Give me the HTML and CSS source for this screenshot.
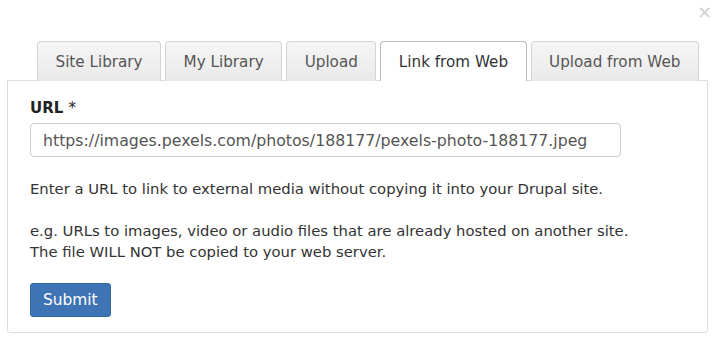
FILE: index.html
```html
<!DOCTYPE html>
<html lang="en">
<head>
  <meta charset="UTF-8">
  <title>Insert Media</title>
  <link rel="stylesheet" href="styles.css">
</head>
<body>
  <div class="dialog">
    <a class="close" href="#">&times;</a>

    <ul class="tabs">
      <li><a href="#">Site Library</a></li>
      <li><a href="#">My Library</a></li>
      <li><a href="#">Upload</a></li>
      <li class="active"><a href="#">Link from Web</a></li>
      <li><a href="#">Upload from Web</a></li>
    </ul>

    <div class="panel">
      <label for="url">URL <span class="req">*</span></label>
      <input type="text" id="url" value="https://images.pexels.com/photos/188177/pexels-photo-188177.jpeg">

      <p>Enter a URL to link to external media without copying it into your Drupal site.</p>
      <p>e.g. URLs to images, video or audio files that are already hosted on another site.<br>
        The file WILL NOT be copied to your web server.</p>

      <button class="submit">Submit</button>
    </div>
  </div>
</body>
</html>
```

FILE: styles.css
```css
* {
  box-sizing: border-box;
}

body {
  margin: 0;
  font-family: 'DejaVu Sans', Verdana, sans-serif;
  font-size: 13px;
  color: #333;
  background: #fff;
}

.dialog {
  position: relative;
  padding: 41px 7px 0 7px;
  width: 715px;
}

.close {
  position: absolute;
  top: 1px;
  right: 3px;
  font-size: 18px;
  color: #d0d0d0;
  text-decoration: none;
}

.tabs {
  list-style: none;
  margin: 0 0 -1px 30px;
  padding: 0;
  display: flex;
  gap: 4px;
}

.tabs li {
  border: 1px solid #d4d4d4;
  border-bottom: none;
  border-radius: 4px 4px 0 0;
  background: linear-gradient(#f6f6f6, #e9e9e9);
  height: 40px;
}

.tabs li a {
  display: block;
  padding: 0 17.5px;
  line-height: 40px;
  font-size: 15.2px;
  color: #555;
  text-decoration: none;
}

.tabs li.active {
  background: #fff;
  border-color: #bbb;
  position: relative;
  z-index: 1;
}

.tabs li.active a {
  color: #333;
}

.panel {
  border: 1px solid #ddd;
  border-radius: 0 0 3px 3px;
  padding: 18px 22px 15px 22px;
  height: 253px;
}

label {
  display: block;
  font-weight: bold;
  font-size: 15px;
  color: #222;
  margin-bottom: 6px;
}

.req {
  font-weight: normal;
}

input {
  display: block;
  width: 591px;
  height: 34px;
  border: 1px solid #ccc;
  border-radius: 4px;
  padding: 0 12px;
  font-family: inherit;
  font-size: 15.75px;
  color: #555;
}

p {
  margin: 21px 0 0;
  line-height: 21px;
  font-size: 14.8px;
}

.submit {
  margin-top: 21px;
  background: #3e74b4;
  color: #fff;
  border: 1px solid #356aa8;
  border-radius: 3px;
  font-family: inherit;
  font-size: 15.4px;
  height: 34px;
  padding: 0 12px;
}
```
